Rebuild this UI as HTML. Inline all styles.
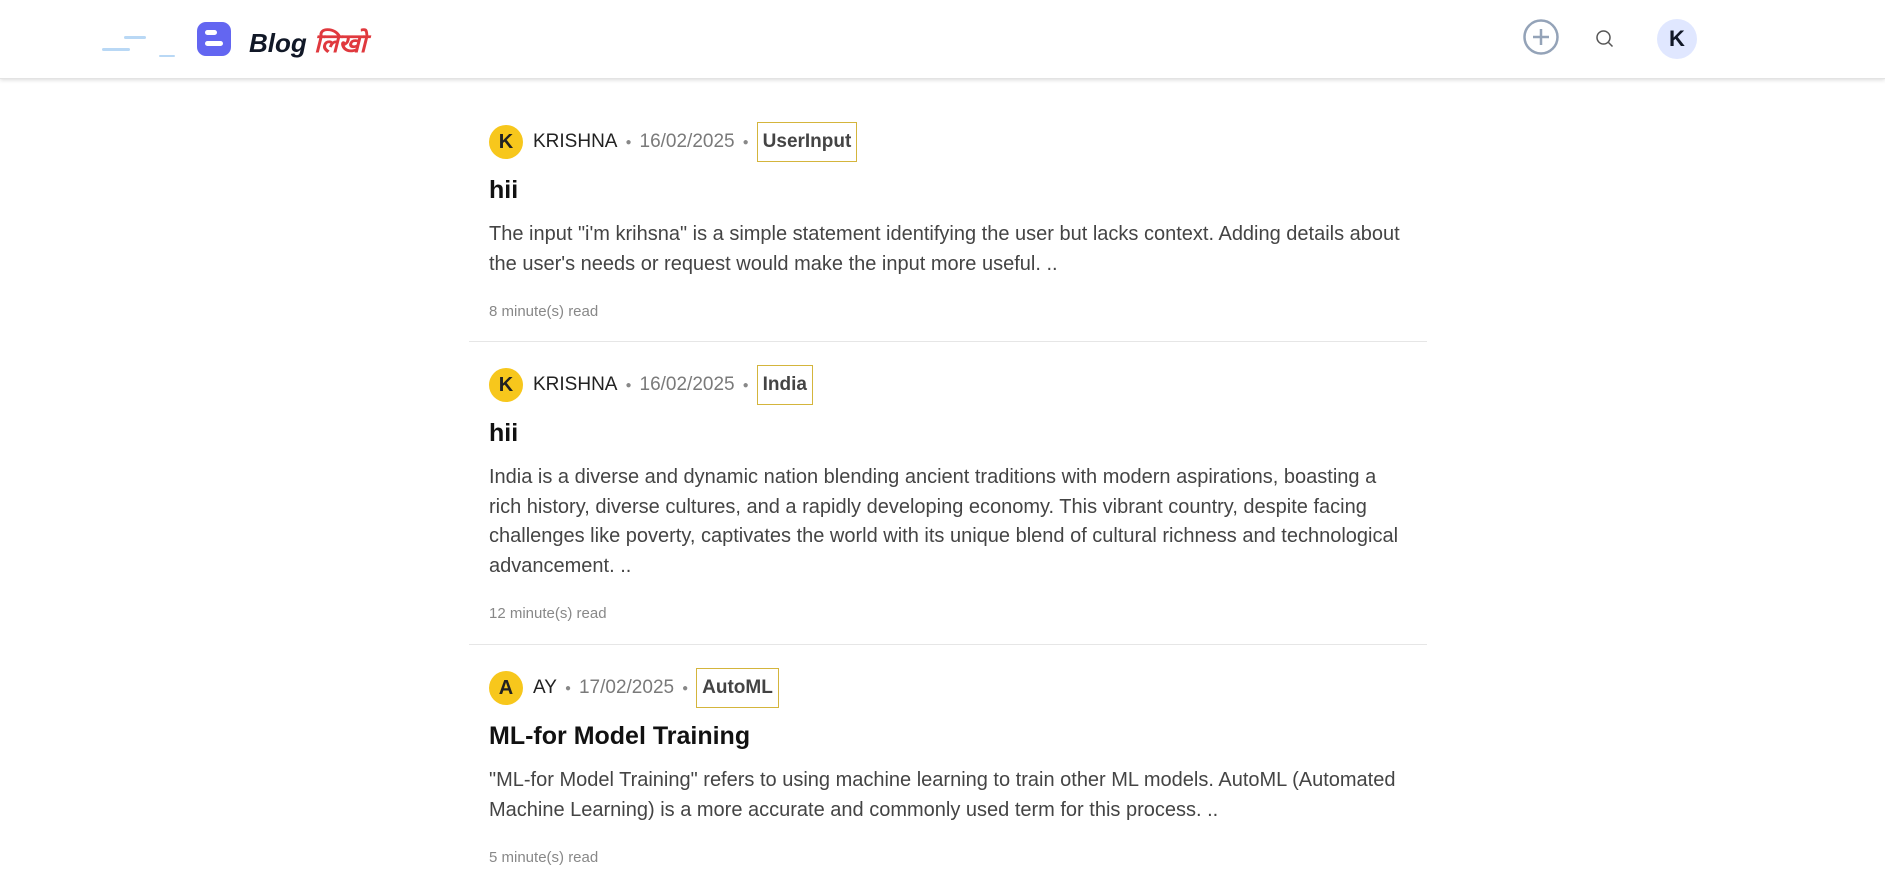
<!DOCTYPE html>
<html><head><meta charset="utf-8"><style>
*{margin:0;padding:0;box-sizing:border-box}
body{width:1885px;height:887px;background:#fff;font-family:"Liberation Sans",sans-serif;overflow:hidden;position:relative}
.hdr{position:absolute;left:0;top:0;width:1885px;height:79px;background:#fff;box-shadow:0 1px 4px rgba(0,0,0,.15);border-bottom:1px solid #e3e3e3}
.ln{position:absolute;height:3px;background:#b9d8f5;border-radius:2px}
.logo{position:absolute;left:249px;top:24px;font-size:26px;font-weight:bold;font-style:italic;color:#111827}
.logo span{color:#e0393e;font-family:"Liberation Sans","Noto Sans CJK SC",sans-serif;font-weight:bold}
.main{position:absolute;left:469px;width:958px}
.post{position:absolute;left:0;width:958px;padding-left:20px}
.meta{display:flex;align-items:center;height:40px;font-size:19px;color:#222}
.av{width:34px;height:34px;border-radius:50%;background:#f7c71c;color:#222;font-weight:bold;font-size:20px;display:flex;align-items:center;justify-content:center;margin-right:10px}
.dot{color:#888;margin:0 8px;font-size:10px}
.date{color:#7a7a7a}
.tag{border:1px solid #d4b53c;padding:8px 5px;font-weight:bold;color:#444}
h2{font-size:25px;font-weight:bold;color:#111;margin-top:14px;height:34px}
p{font-size:20px;line-height:29.5px;color:#444;margin-top:10px;white-space:nowrap}
.rd{font-size:15px;color:#888;margin-top:24px}
.sep{position:absolute;left:0;width:958px;height:1px;background:#e6e6e6}
</style></head><body>
<div class="hdr">
<div class="ln" style="left:102px;top:48px;width:28px"></div>
<div class="ln" style="left:124px;top:36px;width:22px"></div>
<div class="ln" style="left:159px;top:55px;width:16px;height:2px"></div>
<svg style="position:absolute;left:197px;top:22px" width="34" height="34" viewBox="0 0 34 34"><rect x="0" y="0" width="34" height="34" rx="9" fill="#6366f1"/><rect x="8" y="8" width="12" height="5" rx="2.5" fill="#fff"/><rect x="8" y="19" width="18" height="5" rx="2.5" fill="#fff"/></svg>
<div class="logo">Blog <span>लिखो</span></div>
<svg style="position:absolute;left:1523px;top:19px" width="36" height="36" viewBox="0 0 36 36"><circle cx="18" cy="18" r="16.5" fill="none" stroke="#94a3b8" stroke-width="2.5"/><path d="M18 10v16M10 18h16" stroke="#94a3b8" stroke-width="2.5"/></svg>
<svg style="position:absolute;left:1595px;top:29px" width="20" height="20" viewBox="0 0 20 20"><circle cx="8.5" cy="8.5" r="6.5" fill="none" stroke="#555" stroke-width="1.5"/><path d="M13.5 13.5l4 4" stroke="#555" stroke-width="1.5"/></svg>
<div style="position:absolute;left:1657px;top:19px;width:40px;height:40px;border-radius:50%;background:#e0e7ff;color:#111827;font-weight:bold;font-size:22px;display:flex;align-items:center;justify-content:center">K</div>
</div>
<div class="main" style="top:0">
<div class="post" style="top:122px">
<div class="meta"><div class="av">K</div>KRISHNA<span class="dot">●</span><span class="date">16/02/2025</span><span class="dot">●</span><span class="tag">UserInput</span></div>
<h2>hii</h2>
<p>The input "i'm krihsna" is a simple statement identifying the user but lacks context. Adding details about<br>the user's needs or request would make the input more useful. ..</p>
<div class="rd">8 minute(s) read</div>
</div>
<div class="sep" style="top:341px"></div>
<div class="post" style="top:365px">
<div class="meta"><div class="av">K</div>KRISHNA<span class="dot">●</span><span class="date">16/02/2025</span><span class="dot">●</span><span class="tag">India</span></div>
<h2>hii</h2>
<p>India is a diverse and dynamic nation blending ancient traditions with modern aspirations, boasting a<br>rich history, diverse cultures, and a rapidly developing economy. This vibrant country, despite facing<br>challenges like poverty, captivates the world with its unique blend of cultural richness and technological<br>advancement. ..</p>
<div class="rd">12 minute(s) read</div>
</div>
<div class="sep" style="top:644px"></div>
<div class="post" style="top:668px">
<div class="meta"><div class="av">A</div>AY<span class="dot">●</span><span class="date">17/02/2025</span><span class="dot">●</span><span class="tag">AutoML</span></div>
<h2>ML-for Model Training</h2>
<p>"ML-for Model Training" refers to using machine learning to train other ML models. AutoML (Automated<br>Machine Learning) is a more accurate and commonly used term for this process. ..</p>
<div class="rd">5 minute(s) read</div>
</div>
</div>
</body></html>
